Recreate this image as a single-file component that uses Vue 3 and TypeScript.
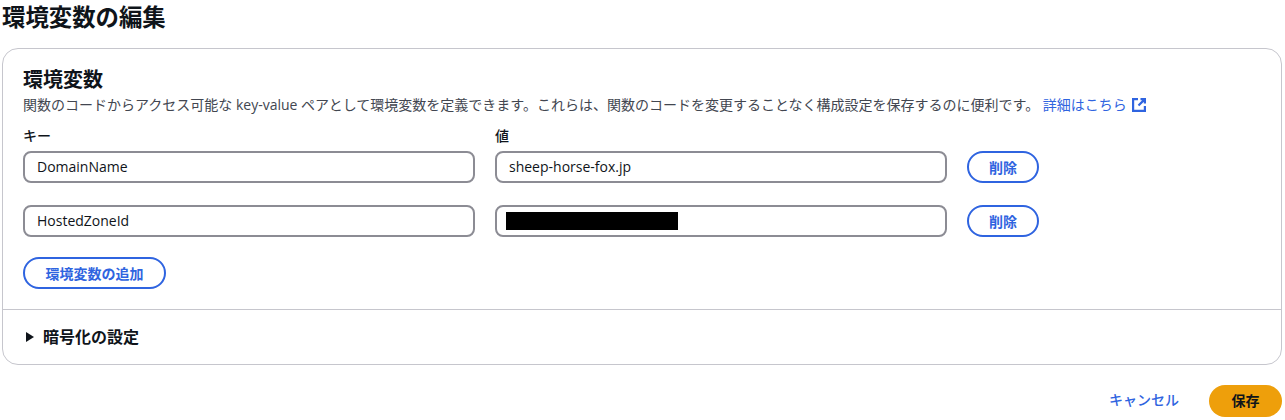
<script setup lang="ts">
const rows = [
  { key: 'DomainName', value: 'sheep-horse-fox.jp', masked: false },
  { key: 'HostedZoneId', value: '', masked: true }
]
</script>

<template>
  <div class="page">
    <h1>環境変数の編集</h1>
    <div class="card">
      <div class="body">
        <h2>環境変数</h2>
        <p class="desc">
          関数のコードからアクセス可能な key-value ペアとして環境変数を定義できます。これらは、関数のコードを変更することなく構成設定を保存するのに便利です。
          <a class="link">詳細はこちら
            <svg width="14" height="14" viewBox="0 0 14 14" fill="none" stroke="currentColor" stroke-width="2.2">
              <path d="M6 1.1H1.1v11.8h11.8V8M8.5 1.1h4.4v4.4M12.6 1.4L6.5 7.5" />
            </svg>
          </a>
        </p>
        <div class="labels">
          <label>キー</label>
          <label>値</label>
        </div>
        <div v-for="row in rows" :key="row.key" class="row">
          <div class="input">{{ row.key }}</div>
          <div class="input">
            <span v-if="row.masked" class="mask"></span>
            <template v-else>{{ row.value }}</template>
          </div>
          <button class="btn">削除</button>
        </div>
        <button class="btn add">環境変数の追加</button>
      </div>
      <div class="foot">
        <span class="caret"></span>
        <span>暗号化の設定</span>
      </div>
    </div>
    <div class="actions">
      <a class="cancel">キャンセル</a>
      <button class="save">保存</button>
    </div>
  </div>
</template>

<style>
body {
  background: #fff;
}
</style>

<style scoped>
.page {
  width: 1285px;
  height: 420px;
  overflow: hidden;
  box-sizing: border-box;
  padding: 1px 3px 0 2px;
  font-family: "Open Sans", "Noto Sans CJK JP", sans-serif;
  font-size: 14px;
  color: #0f141a;
}

h1 {
  margin: 0 0 14px;
  font-size: 23.4px;
  line-height: 33px;
  font-weight: 700;
}

.card {
  border: 1px solid #c6c6cd;
  border-radius: 16px;
}

.body {
  padding: 17px 20px 20px;
  border-bottom: 1px solid #c6c6cd;
}

h2 {
  margin: 0 0 1px;
  font-size: 20px;
  line-height: 28px;
  font-weight: 700;
}

.desc {
  margin: 0 0 13px;
  font-size: 14px;
  line-height: 20px;
  color: #424650;
}

.link {
  color: #2f64e0;
}

.link svg {
  vertical-align: -2px;
  margin-left: 2px;
}

.labels {
  display: grid;
  grid-template-columns: 452px 452px;
  gap: 20px;
  font-size: 14px;
  line-height: 16px;
  font-weight: 500;
  margin-bottom: 7px;
}

.row {
  display: grid;
  grid-template-columns: 452px 452px auto;
  gap: 20px;
  align-items: center;
  justify-items: start;
  margin-bottom: 22px;
}

.row:last-of-type {
  margin-bottom: 20px;
}

.input {
  box-sizing: border-box;
  width: 100%;
  height: 32px;
  border: 2px solid #8c8c94;
  border-radius: 8px;
  padding: 0 12px;
  line-height: 28px;
  display: flex;
  align-items: center;
}

.mask {
  width: 172px;
  height: 18px;
  margin-left: -3px;
  background: #000;
}

.btn {
  height: 32px;
  padding: 0 20px;
  border: 2px solid #2f64e0;
  border-radius: 16px;
  background: #fff;
  color: #2f64e0;
  font: inherit;
  font-weight: 700;
  font-size: 14px;
}

.add {
  display: block;
  width: 143px;
  padding: 0;
}

.foot {
  display: flex;
  align-items: center;
  gap: 9px;
  padding: 16px 23px 16px;
  font-size: 16px;
  line-height: 22px;
  font-weight: 700;
}

.caret {
  width: 0;
  height: 0;
  border-left: 8px solid #0f141a;
  border-top: 5px solid transparent;
  border-bottom: 5px solid transparent;
}

.actions {
  display: flex;
  justify-content: flex-end;
  align-items: center;
  gap: 30px;
  margin-top: 20px;
}

.cancel {
  color: #2f64e0;
  font-weight: 500;
  font-size: 14px;
  line-height: 18px;
  margin-bottom: 2px;
}

.save {
  width: 73px;
  height: 32px;
  padding: 0 0 2px;
  border: none;
  border-radius: 16px;
  background: #ee9f0b;
  color: #0f141a;
  font: inherit;
  font-weight: 700;
  font-size: 14px;
}
</style>
